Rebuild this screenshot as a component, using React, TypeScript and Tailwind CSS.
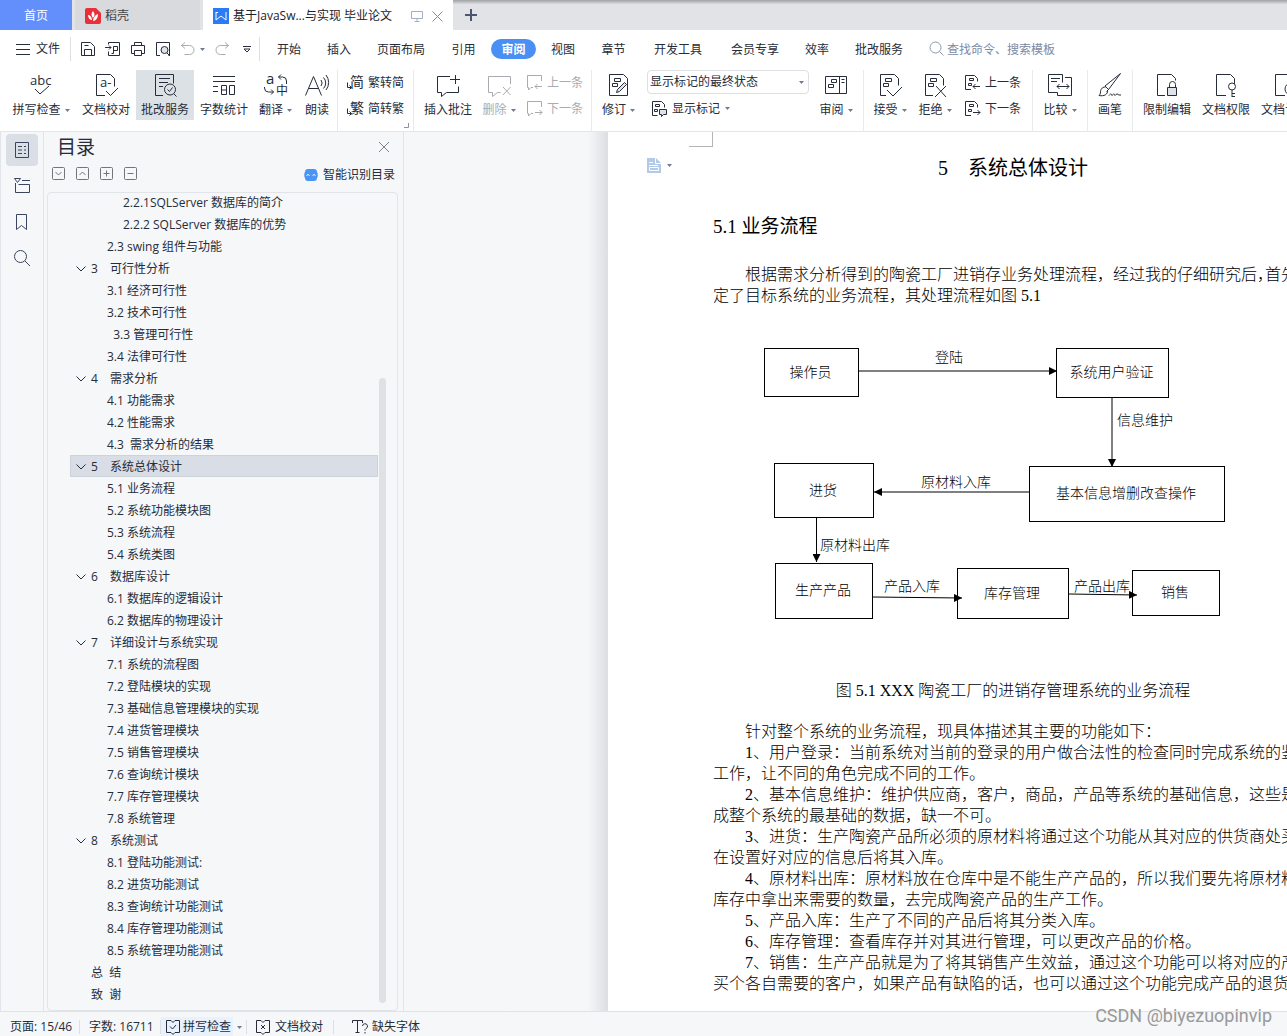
import type { ReactNode } from 'react'

type IconProps = { children: ReactNode; size?: 'sm' | 'lg' }

function Icon({ children, size = 'sm' }: IconProps) {
  return (
    <svg
      aria-hidden
      viewBox={size === 'lg' ? '0 0 24 24' : '0 0 16 16'}
      className={`shrink-0 overflow-visible ${size === 'lg' ? 'h-6 w-6' : 'h-4 w-4'}`}
      fill="none"
      stroke="currentColor"
    >
      {children}
    </svg>
  )
}

function Glyph({ x, y, size, children }: { x: number; y: number; size: number; children: string }) {
  return (
    <text x={x} y={y} fontSize={size} fill="currentColor" stroke="none">
      {children}
    </text>
  )
}

function Caret() {
  return (
    <svg aria-hidden viewBox="0 0 5 3" className="h-[3px] w-[5px] shrink-0 fill-[#6f7b92]">
      <path d="M0 0h5L2.500 3z" />
    </svg>
  )
}

const DOC = 'M12 22.500H2.500v-21h14l4 4v6'
const DOC_MARKS = 'M7.500 5.500h6v3h-6zM5.500 10.500h5v3h-5z'

const icons = {
  save: <path d="M1.500 1.500h9l4 4v9h-13zM4.500 14.500v-6h7v6M4.500 4.500h4" />,
  exportDoc: (
    <path d="M3.500 3.500v-2h11v13h-11v-4M0 6.500h6M4 4.500l2 2-2 2M6.500 12.500h2v-7h4v4h-4" />
  ),
  print: <path d="M4.500 4.500v-3h7v3M4.500 12.500h-3v-8h13v8h-3M4.500 9.500h7v5h-7z" />,
  preview: (
    <>
      <path d="M5 14.500H1.500v-13h13v13h-1M12 12l3 3" />
      <circle cx="9.500" cy="9" r="3.500" fill="#dfe2e8" />
    </>
  ),
  undo: <path d="M5 1.500l-3.500 3 3.500 3M1.500 4.500h8a4 4 0 0 1 0 9h-5" />,
  redo: <path d="M11 1.500l3.500 3-3.500 3M14.500 4.500h-8a4 4 0 0 0 0 9h5" />,
  spell: (
    <>
      <Glyph x={1} y={12} size={13}>abc</Glyph>
      <path d="M6 16l5 5 9-8" />
    </>
  ),
  proof: (
    <>
      <path d="M11 22.500H2.500v-21h14l4 4v8M12 18l4.500 4.500L24 15" />
      <Glyph x={6} y={14} size={13}>a-</Glyph>
    </>
  ),
  correct: (
    <>
      <path d="M10 22.500H2.500v-21h18v9M6 5.500h11M6 9.500h9M6 13.500h4M21 21l2.500 2.500" />
      <circle cx="17" cy="16.500" r="5.500" />
      <path d="M14.500 16.500l2 2 3-4" />
    </>
  ),
  count: (
    <path d="M1 3.500h22M1 8.500h22M1 13.500h5M1 18.500h5M9.500 12.500h5v9h-5zM9.500 17h5M17.500 12.500h5v9h-5z" />
  ),
  translate: (
    <>
      <Glyph x={2} y={11} size={15}>a</Glyph>
      <Glyph x={12} y={22} size={12}>中</Glyph>
      <path d="M17 1.500L14.500 4 17 6.500M14.500 4h4a4 4 0 0 1 4 4v3M.500 14v1a4 4 0 0 0 4 4h5M7 16.500l2.500 2.500L7 21.500" />
    </>
  ),
  read: (
    <path d="M.500 22.500l8-19 8 19M4 15.500h9M16 7a5 5 0 0 1 0 6M18.500 4.500a8 8 0 0 1 0 11M21 2a12 12 0 0 1 0 15" />
  ),
  toSimple: (
    <>
      <Glyph x={3} y={13} size={14}>简</Glyph>
      <path d="M.500 8.500v5h4M2.500 11.500l2 2-2 2" />
    </>
  ),
  toTraditional: (
    <>
      <Glyph x={3} y={13} size={14}>繁</Glyph>
      <path d="M.500 8.500v5h4M2.500 11.500l2 2-2 2" />
    </>
  ),
  addComment: <path d="M14 3.500H1.500v16h4v4l5-4h12v-6M14 6.500h10M19.500 2v9" />,
  removeComment: <path d="M23.500 11V3.500h-22v16h4v4l5-4h3M16 14l7.500 8M23.500 14L16 22" />,
  prevComment: <path d="M15.500 7V1.500h-14v12h1v2.500l2.500-2.500h2M16 12.500H9M11.500 10L9 12.500l2.500 2.500" />,
  nextComment: <path d="M15.500 7V1.500h-14v12h1v2.500l2.500-2.500h2M9 12.500h7M13.500 10l2.500 2.500-2.500 2.500" />,
  track: (
    <>
      <path d="M2.500 1.500h14l4 4v17h-18z" />
      <path d={DOC_MARKS} />
      <path d="M9.500 19.500l1-3 7-7 2 2-7 7z" fill="#dfe2e8" />
    </>
  ),
  showMarks: (
    <>
      <path d="M6.500 15.500h-5v-14h9l3 3v3M4.500 4.500h4v2h-4zM3.500 9.500h3v2h-3z" />
      <path d="M8.500 9.500h7v5h-3l-2 2v-2h-2z" fill="#dfe2e8" />
    </>
  ),
  pane: (
    <path d="M1.500 3.500h21v17h-21zM15.500 3.500v17M7.500 6.500h5v3h-5zM4.500 11.500h5v3h-5zM17.500 6.500h3M17.500 9.500h3" />
  ),
  accept: <path d={`M8 22.500H2.500v-21h14l4 4v7${DOC_MARKS}M9 17l6 6 9-9`} />,
  reject: <path d={`M10 22.500H2.500v-21h14l4 4v7${DOC_MARKS}M13 13l10 11M23 13L12 24`} />,
  prevChange: (
    <path d="M7 15.500H1.500v-14h9l3 3v3M5.500 4.500h4v2h-4zM4.500 9.500h3v2h-3zM16 12.500H9M11.500 10L9 12.500l2.500 2.500" />
  ),
  nextChange: (
    <path d="M7 15.500H1.500v-14h9l3 3v3M5.500 4.500h4v2h-4zM4.500 9.500h3v2h-3zM9 12.500h7M13.500 10l2.500 2.500-2.500 2.500" />
  ),
  compare: (
    <path d="M9.500 19.500h-9v-18h14v8M3 5.500h9M3 8.500h6M17 4.500h6.500v18h-14v-3M9 13.500h12M11.500 11L9 13.500l2.500 2.500M18.500 11l2.500 2.500-2.500 2.500" />
  ),
  brush: (
    <>
      <path d="M22.500.500L7 13l3.500 3.500zM7 13l3.500 3.500-2 2" />
      <path d="M7.500 14c-4 0-5 3-5 5 0 1.500-.500 2.500-1.500 3.500 5 1 9-1 8.500-5M11 22.500c1.500-2 2.500-2 3 0 1.500-2 2.500-2 3 0 1.500-2 3-2 3.500-.500h2.500" />
    </>
  ),
  lock: (
    <>
      <path d="M10 22.500H2.500v-21h14l4 4v2M14.500 15v-3.500a3 3 0 0 1 6 0V15" />
      <path d="M12.500 14.500h9v8h-9z" fill="#dfe2e8" />
    </>
  ),
  key: (
    <>
      <path d={`${DOC}M18 17v7M18 20.500h3M18 23.500h3`} />
      <circle cx="18" cy="13.500" r="3.500" fill="#fff" />
    </>
  ),
  certify: (
    <>
      <path d={DOC} />
      <circle cx="18" cy="16" r="6" fill="#fff" />
    </>
  ),
}

type IconName = keyof typeof icons

function BigButton({
  icon,
  label,
  width,
  caret,
  active,
  disabled,
}: {
  icon: IconName
  label: string
  width: string
  caret?: boolean
  active?: boolean
  disabled?: boolean
}) {
  return (
    <button
      type="button"
      disabled={disabled}
      className={`flex h-[50px] shrink-0 flex-col items-center whitespace-nowrap pt-[3px] ${width} ${
        active ? 'bg-[#dce1e6]' : ''
      } ${disabled ? 'text-[#a9abb0]' : ''}`}
    >
      <Icon size="lg">{icons[icon]}</Icon>
      <span className="mt-[5px] flex items-center gap-1 leading-4">
        {label}
        {caret && <Caret />}
      </span>
    </button>
  )
}

function SmallButton({
  icon,
  label,
  caret,
  disabled,
}: {
  icon: IconName
  label: string
  caret?: boolean
  disabled?: boolean
}) {
  return (
    <button
      type="button"
      disabled={disabled}
      className={`flex h-6 items-center gap-[5px] whitespace-nowrap ${disabled ? 'text-[#a9abb0]' : ''}`}
    >
      <Icon>{icons[icon]}</Icon>
      <span className="pt-[2px]">{label}</span>
      {caret && <Caret />}
    </button>
  )
}

function Divider() {
  return <div className="h-[62px] w-px shrink-0 self-start bg-[#e8eaed]" />
}

function TabBar() {
  return (
    <div className="flex h-[30px] shrink-0 bg-[#e1e3e7]">
      <button type="button" className="w-[72px] bg-[#628ffb] pt-px text-white">
        首页
      </button>
      <button
        type="button"
        className="ml-[3px] flex w-[125px] items-center gap-1 bg-[#d8dadd] pl-[10px] pt-[2px] text-[#3f4449]"
      >
        <svg aria-hidden viewBox="0 0 16 16" className="h-4 w-4">
          <path d="M2 0h9l5 5v9a2 2 0 0 1-2 2H2a2 2 0 0 1-2-2V2a2 2 0 0 1 2-2z" fill="#e8303a" />
          <path d="M8 3c2 2 2 5 0 7-2-2-2-5 0-7zM3 7c2 0 4 2 4 5-2 0-4-2-4-5zM13 6c0 4-2 7-5 7 0-3 2-6 5-7z" fill="#fff" />
        </svg>
        稻壳
      </button>
      <div className="ml-[3px] flex w-[250px] items-center bg-white pl-[10px] pt-[2px] text-[#1d2129]">
        <svg aria-hidden viewBox="0 0 16 16" className="mr-1 h-4 w-4">
          <path d="M0 0h16v16H0z" fill="#2a7bf4" />
          <path d="M3 4v8l5-4 5 4V4M3 4.500h2" fill="none" stroke="#fff" />
        </svg>
        <span className="whitespace-nowrap">基于JavaSw...与实现 毕业论文</span>
        <span className="ml-auto text-[#a5afc4]">
          <svg aria-hidden viewBox="0 0 12 12" className="h-3 w-3" fill="none" stroke="currentColor">
            <path d="M.500 1.500h11v7H.500zM6 8.500v3M3.500 11.500h5" />
          </svg>
        </span>
        <button type="button" aria-label="关闭标签" className="ml-[9px] mr-[10px] text-[#7c89a8]">
          <svg aria-hidden viewBox="0 0 11 11" className="h-[11px] w-[11px]" fill="none" stroke="currentColor">
            <path d="M.500.500l10 10M10.500.500l-10 10" />
          </svg>
        </button>
      </div>
      <div className="flex flex-1 bg-linear-to-b from-[#9fa1a4] to-[#e1e3e7] to-15%">
        <button type="button" aria-label="新建标签" className="ml-3 text-[#4c566e]">
          <svg aria-hidden viewBox="0 0 12 12" className="h-3 w-3" fill="none" stroke="currentColor" strokeWidth="2">
            <path d="M6 0v12M0 6h12" />
          </svg>
        </button>
      </div>
    </div>
  )
}

const quickTools: { icon: IconName; label: string }[] = [
  { icon: 'save', label: '保存' },
  { icon: 'exportDoc', label: '输出为PDF' },
  { icon: 'print', label: '打印' },
  { icon: 'preview', label: '打印预览' },
]

const menus = [
  { label: '开始', width: 'w-[50px]' },
  { label: '插入', width: 'w-[50px]' },
  { label: '页面布局', width: 'w-[74px]' },
  { label: '引用', width: 'w-[51px]' },
  { label: '审阅', width: 'w-[49px]', active: true },
  { label: '视图', width: 'w-[50px]' },
  { label: '章节', width: 'w-[51px]' },
  { label: '开发工具', width: 'w-[78px]' },
  { label: '会员专享', width: 'w-[76px]' },
  { label: '效率', width: 'w-[48px]' },
  { label: '批改服务', width: 'w-[76px]' },
]

function MenuBar() {
  return (
    <div className="flex h-[38px] shrink-0 items-center">
      <button type="button" className="ml-4 flex w-[54px] shrink-0 items-center gap-[6px]">
        <svg aria-hidden viewBox="0 0 14 11" className="h-[11px] w-[14px]" stroke="currentColor">
          <path d="M0 .500h14M0 5.500h14M0 10.500h14" />
        </svg>
        文件
      </button>
      <div className="h-6 w-px bg-[#dcdfe3]" />
      <div className="ml-[9px] flex shrink-0 items-center gap-[9px]">
        {quickTools.map((tool) => (
          <button key={tool.label} type="button" aria-label={tool.label}>
            <Icon>{icons[tool.icon]}</Icon>
          </button>
        ))}
        <button type="button" aria-label="撤销" className="flex items-center gap-1 text-[#a9abb0]">
          <Icon>{icons.undo}</Icon>
          <Caret />
        </button>
        <button type="button" aria-label="恢复" className="text-[#a9abb0]">
          <Icon>{icons.redo}</Icon>
        </button>
        <button type="button" aria-label="自定义快速访问工具栏" className="ml-1">
          <svg aria-hidden viewBox="0 0 8 8" className="h-2 w-2" fill="none" stroke="currentColor">
            <path d="M0 1.500h8M1 4h6L4 7z" />
          </svg>
        </button>
      </div>
      <div className="ml-2 h-6 w-px bg-[#dcdfe3]" />
      <nav className="ml-1 flex shrink-0 items-center">
        {menus.map((menu) => (
          <button key={menu.label} type="button" className={`flex justify-center leading-[18px] ${menu.width}`}>
            <span
              className={menu.active ? 'rounded-full bg-[#4a8ff3] px-[10px] pt-[2px] font-bold text-white' : 'pt-[2px]'}
            >
              {menu.label}
            </span>
          </button>
        ))}
      </nav>
      <div className="ml-3 flex flex-1 items-center gap-[2px] text-[#8c98ae]">
        <Icon>
          <circle cx="6.500" cy="6.500" r="5.500" />
          <path d="M10.500 10.500l4 4" />
        </Icon>
        <input
          type="text"
          aria-label="搜索"
          placeholder="查找命令、搜索模板"
          className="h-6 min-w-0 flex-1 bg-transparent outline-none placeholder:text-[#7c89a3]"
        />
      </div>
    </div>
  )
}

function Ribbon() {
  return (
    <div className="flex h-16 shrink-0 items-start overflow-hidden border-b border-[#e4e6e9] bg-white pl-[6px] pt-[2px]">
      <BigButton icon="spell" label="拼写检查" width="w-[70px]" caret />
      <BigButton icon="proof" label="文档校对" width="w-[60px]" />
      <BigButton icon="correct" label="批改服务" width="w-[58px]" active />
      <BigButton icon="count" label="字数统计" width="w-[60px]" />
      <BigButton icon="translate" label="翻译" width="w-[43px]" caret />
      <BigButton icon="read" label="朗读" width="w-[40px]" />
      <Divider />
      <div className="ml-[9px] flex shrink-0 flex-col gap-[2px]">
        <SmallButton icon="toSimple" label="繁转简" />
        <SmallButton icon="toTraditional" label="简转繁" />
      </div>
      <svg aria-hidden viewBox="0 0 5 5" className="mr-1 mt-[53px] h-[5px] w-[5px] shrink-0" fill="none" stroke="#8a94a6">
        <path d="M4.500 0v4.500H0" />
      </svg>
      <Divider />
      <BigButton icon="addComment" label="插入批注" width="w-[68px]" />
      <BigButton icon="removeComment" label="删除" width="w-[34px]" caret disabled />
      <div className="ml-[10px] mr-2 flex shrink-0 flex-col gap-[2px]">
        <SmallButton icon="prevComment" label="上一条" disabled />
        <SmallButton icon="nextComment" label="下一条" disabled />
      </div>
      <Divider />
      <BigButton icon="track" label="修订" width="w-[53px]" caret />
      <div className="ml-[2px] flex w-[162px] shrink-0 flex-col gap-[2px]">
        <div className="relative flex h-6 rounded-sm border border-[#dcdfe3]">
          <select aria-label="标记状态" className="w-full appearance-none bg-transparent pl-[2px] outline-none">
            <option>显示标记的最终状态</option>
          </select>
          <span className="pointer-events-none absolute right-1 top-[10px]">
            <Caret />
          </span>
        </div>
        <div className="pl-1">
          <SmallButton icon="showMarks" label="显示标记" caret />
        </div>
      </div>
      <BigButton icon="pane" label="审阅" width="w-[54px]" caret />
      <Divider />
      <BigButton icon="accept" label="接受" width="w-[52px]" caret />
      <BigButton icon="reject" label="拒绝" width="w-[38px]" caret />
      <div className="ml-[10px] mr-[11px] flex shrink-0 flex-col gap-[2px]">
        <SmallButton icon="prevChange" label="上一条" />
        <SmallButton icon="nextChange" label="下一条" />
      </div>
      <Divider />
      <BigButton icon="compare" label="比较" width="w-[54px]" caret />
      <Divider />
      <BigButton icon="brush" label="画笔" width="w-[44px]" />
      <Divider />
      <BigButton icon="lock" label="限制编辑" width="w-[68px]" />
      <BigButton icon="key" label="文档权限" width="w-[50px]" />
      <BigButton icon="certify" label="文档认证" width="w-[68px]" />
    </div>
  )
}

function SideRail() {
  const button = 'flex h-8 w-8 items-center justify-center rounded-sm'
  return (
    <div className="flex w-11 shrink-0 flex-col items-center gap-1 border-x border-[#e1e4e9] pt-[2px] text-[#3b4560]">
      <button type="button" aria-label="目录" className={`${button} bg-[#dadfe6]`}>
        <Icon>
          <path d="M1.500.500h13v15h-13zM4 4.500h4M10 4.500h2M4 8h4M10 8h2M4 11.500h4M10 11.500h2" />
        </Icon>
      </button>
      <button type="button" aria-label="章节" className={button}>
        <Icon>
          <path d="M.500.500h6l-3 4zM8 2.500h8M1.500 5v9.500h14v-8h-11" />
        </Icon>
      </button>
      <button type="button" aria-label="书签" className={button}>
        <Icon>
          <path d="M2.500.500h10v15l-5-4-5 4z" />
        </Icon>
      </button>
      <button type="button" aria-label="查找" className={button}>
        <Icon>
          <circle cx="6.500" cy="6.500" r="6" />
          <path d="M11 11l5 5" />
        </Icon>
      </button>
    </div>
  )
}

type Entry = { text: string; level: 1 | 2 | 3; no?: string; selected?: boolean }

const outline: Entry[] = [
  { level: 3, text: '2.2.1SQLServer 数据库的简介' },
  { level: 3, text: '2.2.2 SQLServer 数据库的优势' },
  { level: 2, text: '2.3 swing 组件与功能' },
  { level: 1, no: '3', text: '可行性分析' },
  { level: 2, text: '3.1 经济可行性' },
  { level: 2, text: '3.2 技术可行性' },
  { level: 2, text: '  3.3 管理可行性' },
  { level: 2, text: '3.4 法律可行性' },
  { level: 1, no: '4', text: '需求分析' },
  { level: 2, text: '4.1 功能需求' },
  { level: 2, text: '4.2 性能需求' },
  { level: 2, text: '4.3  需求分析的结果' },
  { level: 1, no: '5', text: '系统总体设计', selected: true },
  { level: 2, text: '5.1 业务流程' },
  { level: 2, text: '5.2 系统功能模块图' },
  { level: 2, text: '5.3 系统流程' },
  { level: 2, text: '5.4 系统类图' },
  { level: 1, no: '6', text: '数据库设计' },
  { level: 2, text: '6.1 数据库的逻辑设计' },
  { level: 2, text: '6.2 数据库的物理设计' },
  { level: 1, no: '7', text: '详细设计与系统实现' },
  { level: 2, text: '7.1 系统的流程图' },
  { level: 2, text: '7.2 登陆模块的实现' },
  { level: 2, text: '7.3 基础信息管理模块的实现' },
  { level: 2, text: '7.4 进货管理模块' },
  { level: 2, text: '7.5 销售管理模块' },
  { level: 2, text: '7.6 查询统计模块' },
  { level: 2, text: '7.7 库存管理模块' },
  { level: 2, text: '7.8 系统管理' },
  { level: 1, no: '8', text: '系统测试' },
  { level: 2, text: '8.1 登陆功能测试:' },
  { level: 2, text: '8.2 进货功能测试' },
  { level: 2, text: '8.3 查询统计功能测试' },
  { level: 2, text: '8.4 库存管理功能测试' },
  { level: 2, text: '8.5 系统管理功能测试' },
  { level: 1, text: '总  结' },
  { level: 1, text: '致  谢' },
]

const indents = { 1: 'pl-[5px]', 2: 'pl-9', 3: 'pl-[52px]' }

function OutlineRow({ entry }: { entry: Entry }) {
  return (
    <li className="first:-mt-[2px]">
      <button
        type="button"
        className={`flex h-[22px] w-full items-center whitespace-pre border pt-[2px] text-left ${indents[entry.level]} ${
          entry.selected ? 'border-[#ccd3db] bg-[#d9dee6]' : 'border-transparent'
        }`}
      >
        {entry.level === 1 && (
          <svg aria-hidden viewBox="0 0 10 6" className="mr-[5px] h-[6px] w-[10px]" fill="none" stroke="currentColor">
            {entry.no && <path d="M.500.500L5 5 9.500.500" />}
          </svg>
        )}
        {entry.no && <span className="w-[19px]">{entry.no}</span>}
        {entry.text}
      </button>
    </li>
  )
}

const outlineTools = [
  { label: '展开', d: 'M3.500 5l3 3 3-3' },
  { label: '收起', d: 'M3.500 8l3-3 3 3' },
  { label: '提升', d: 'M3.500 6.500h6M6.500 3.500v6' },
  { label: '降低', d: 'M3.500 6.500h6' },
]

function OutlinePanel() {
  return (
    <aside className="flex w-[360px] shrink-0 flex-col border-r border-[#e1e4e9] pl-[3px] pr-[5px]">
      <div className="flex h-[30px] items-center justify-between pl-[10px] pr-[9px]">
        <h2 className="text-[19px] leading-7">目录</h2>
        <button type="button" aria-label="关闭" className="text-[#7a8190]">
          <svg aria-hidden viewBox="0 0 10 10" className="h-[10px] w-[10px]" fill="none" stroke="currentColor">
            <path d="M0 0l10 10M10 0L0 10" />
          </svg>
        </button>
      </div>
      <div className="flex h-[30px] items-start gap-[11px] pl-[5px] pr-[3px] pt-[5px]">
        {outlineTools.map((tool) => (
          <button key={tool.label} type="button" aria-label={tool.label} className="text-[#71757c]">
            <svg aria-hidden viewBox="0 0 13 13" className="h-[13px] w-[13px]" fill="none" stroke="currentColor">
              <rect x=".5" y=".5" width="12" height="12" rx="1" />
              <path d={tool.d} />
            </svg>
          </button>
        ))}
        <button type="button" className="ml-auto flex items-center gap-[5px] leading-4">
          <svg aria-hidden viewBox="0 0 14 12" className="h-3 w-[14px]">
            <path d="M4 0h6c2 0 3 1 3 3 1 1 1 5 0 6 0 2-1 3-3 3H4c-2 0-3-1-3-3-1-1-1-5 0-6 0-2 1-3 3-3z" fill="#4a94f5" />
            <path d="M2.500 6.500l1.500-1 1.500 1M8.500 6.500l1.500-1 1.500 1" fill="none" stroke="#fff" />
          </svg>
          智能识别目录
        </button>
      </div>
      <div className="flex min-h-0 flex-1 overflow-hidden rounded-sm border border-[#e1e4e9] pl-[22px] pr-[11px]">
        <ul className="flex-1">
          {outline.map((entry) => (
            <OutlineRow key={entry.text} entry={entry} />
          ))}
        </ul>
        <div className="mb-[7px] ml-px mt-[185px] w-[7px] rounded-full bg-[#dfe2e5]" />
      </div>
    </aside>
  )
}

const nodes = [
  { text: '操作员', x: 51, y: 8, w: 95, h: 49 },
  { text: '系统用户验证', x: 343, y: 8, w: 113, h: 50 },
  { text: '基本信息增删改查操作', x: 316, y: 126, w: 196, h: 56 },
  { text: '进货', x: 61, y: 123, w: 100, h: 55 },
  { text: '生产产品', x: 62, y: 223, w: 98, h: 56 },
  { text: '库存管理', x: 244, y: 228, w: 112, h: 51 },
  { text: '销售', x: 419, y: 230, w: 88, h: 46 },
]

const edges = [
  { text: '登陆', x: 222, y: 22, d: 'M146 31H344' },
  { text: '信息维护', x: 404, y: 85, d: 'M399 58V127' },
  { text: '原材料入库', x: 208, y: 147, d: 'M316 152H161' },
  { text: '原材料出库', x: 107, y: 210, d: 'M103.500 178V222' },
  { text: '产品入库', x: 171, y: 251, d: 'M160 257L249 258' },
  { text: '产品出库', x: 361, y: 251, d: 'M356 254L424 255' },
]

function FlowChart() {
  return (
    <svg viewBox="0 0 520 290" className="mt-[34px] h-[290px] w-[520px] text-sm">
      <defs>
        <marker id="arrow" viewBox="0 0 8 8" refX="8" refY="4" markerWidth="8" markerHeight="8" orient="auto">
          <path d="M0 0l8 4-8 4z" />
        </marker>
      </defs>
      {nodes.map((n) => (
        <g key={n.text}>
          <rect x={n.x + 0.5} y={n.y + 0.5} width={n.w - 1} height={n.h - 1} fill="none" stroke="#000" />
          <text x={n.x + n.w / 2 - 1} y={n.y + n.h / 2 + 4} textAnchor="middle">
            {n.text}
          </text>
        </g>
      ))}
      {edges.map((e) => (
        <g key={e.text}>
          <path d={e.d} stroke="#000" markerEnd="url(#arrow)" />
          <text x={e.x} y={e.y}>
            {e.text}
          </text>
        </g>
      ))}
    </svg>
  )
}

// each paragraph is kept as its typeset lines
const paragraphs = [
  ['针对整个系统的业务流程，现具体描述其主要的功能如下：'],
  ['1、用户登录：当前系统对当前的登录的用户做合法性的检查同时完成系统的鉴', '工作，让不同的角色完成不同的工作。'],
  ['2、基本信息维护：维护供应商，客户，商品，产品等系统的基础信息，这些是', '成整个系统的最基础的数据，缺一不可。'],
  ['3、进货：生产陶瓷产品所必须的原材料将通过这个功能从其对应的供货商处买', '在设置好对应的信息后将其入库。'],
  ['4、原材料出库：原材料放在仓库中是不能生产产品的，所以我们要先将原材料', '库存中拿出来需要的数量，去完成陶瓷产品的生产工作。'],
  ['5、产品入库：生产了不同的产品后将其分类入库。'],
  ['6、库存管理：查看库存并对其进行管理，可以更改产品的价格。'],
  ['7、销售：生产产品就是为了将其销售产生效益，通过这个功能可以将对应的产', '买个各自需要的客户，如果产品有缺陷的话，也可以通过这个功能完成产品的退货'],
]

function Paragraph({ lines }: { lines: ReactNode[] }) {
  return (
    <p className="indent-8">
      {lines.map((line, i) => (
        <span key={i}>
          {i > 0 && <br />}
          {line}
        </span>
      ))}
    </p>
  )
}

function DocumentPage() {
  return (
    <main className="flex min-w-0 flex-1 overflow-hidden bg-white text-black">
      <div className="flex w-[105px] shrink-0 flex-col">
        <div className="h-[15px] w-6 self-end border-b border-r border-[#b5b5b5]" />
        <button type="button" aria-label="段落布局" className="ml-[39px] mt-[11px] flex items-center gap-[6px]">
          <svg aria-hidden viewBox="0 0 14 15" className="h-[15px] w-[14px]">
            <path d="M0 0h9l5 5v10H0z" fill="#b3c9ea" />
            <path d="M8.500 0v5.500H14M2 4.500h4M2 7.500h9M2.500 9.500h9v3h-9z" fill="none" stroke="#fff" />
          </svg>
          <Caret />
        </button>
      </div>
      <article className="w-[600px] shrink-0 whitespace-nowrap pt-[22px] font-['Liberation_Serif','Noto_Sans_CJK_SC',serif] text-base font-light leading-[21px]">
        <h1 className="text-center text-xl font-normal leading-7">5　系统总体设计</h1>
        <h2 className="mt-[31px] text-[19px] font-normal leading-7">5.1 业务流程</h2>
        <div className="mt-[23px]">
          <Paragraph
            lines={[
              <>
                根据需求分析得到的陶瓷工厂进销存业务处理流程，经过我的仔细研究后
                <span className="[font-feature-settings:'halt']">，</span>首先
              </>,
              '定了目标系统的业务流程，其处理流程如图 5.1',
            ]}
          />
        </div>
        <FlowChart />
        <p className="mt-[50px] text-center">图 5.1 XXX 陶瓷工厂的进销存管理系统的业务流程</p>
        <div className="mt-5">
          {paragraphs.map((lines) => (
            <Paragraph key={lines[0]} lines={lines} />
          ))}
        </div>
      </article>
    </main>
  )
}

function StatusBar() {
  const divider = <span className="h-[14px] w-px bg-[#dcdfe3]" />
  return (
    <footer className="relative flex h-[25px] shrink-0 items-center whitespace-nowrap border-t border-[#dfe2e6] pt-[6px]">
      <span className="w-[79px] pl-[10px]">页面: 15/46</span>
      {divider}
      <span className="w-20 pl-[9px]">字数: 16711</span>
      {divider}
      <button type="button" className="flex h-5 items-center gap-[2px] bg-[#e8f1fc] pl-1 pr-[2px]">
        <Icon>
          <path d="M6 1.500H1.500v12H6l2 2 2-2h4.500v-12H10l-2 2zM5 7.500l2.500 2.500L11 6" />
        </Icon>
        拼写检查
      </button>
      <span className="flex w-[13px] justify-center">
        <Caret />
      </span>
      {divider}
      <button type="button" className="ml-2 flex items-center gap-1 pr-[10px]">
        <Icon>
          <path d="M6 1.500H1.500v12H6l2 2 2-2h4.500v-12H10l-2 2zM6 6l4 4M10 6l-4 4" />
        </Icon>
        文档校对
      </button>
      {divider}
      <button type="button" className="ml-[18px] flex items-center gap-1">
        <Icon>
          <path d="M.500 4V1.500h10V4M5.500 1.500v12M3.500 13.500h4M10.500 7a2.500 2.500 0 1 1 3.500 2.500l-1 1v1M13 13v1.500" />
        </Icon>
        缺失字体
      </button>
      <span className="absolute bottom-2 right-[15px] font-['Roboto',sans-serif] text-lg leading-6 text-[#999]">
        CSDN @biyezuopinvip
      </span>
    </footer>
  )
}

export default function App() {
  return (
    <div className="flex h-screen flex-col overflow-hidden bg-[#f5f7f9] font-['Open_Sans','Noto_Sans_CJK_SC',sans-serif] text-xs text-[#262c3a]">
      <header className="flex shrink-0 flex-col bg-white">
        <TabBar />
        <MenuBar />
        <Ribbon />
      </header>
      <div className="flex min-h-0 flex-1">
        <SideRail />
        <OutlinePanel />
        <div className="w-[204px] shrink-0 bg-linear-to-r from-[#f5f7f9] from-90% to-[#dcdee1]" />
        <DocumentPage />
      </div>
      <StatusBar />
    </div>
  )
}
